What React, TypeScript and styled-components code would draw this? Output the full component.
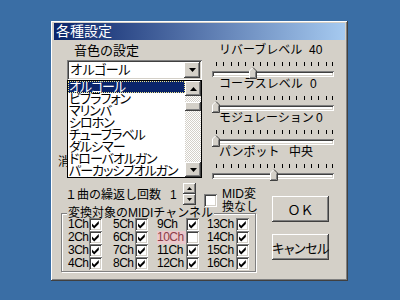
import React from 'react'
import styled, { createGlobalStyle } from 'styled-components'

const FONT = `"Liberation Sans", "Noto Sans CJK JP", sans-serif`

const GlobalStyle = createGlobalStyle`
  html, body {
    margin: 0;
    padding: 0;
  }
  body {
    width: 400px;
    height: 300px;
    overflow: hidden;
    background: #3a6ea5;
    font-family: ${FONT};
    color: #000;
  }
  svg {
    display: block;
  }
`

const raised = `
  box-shadow: inset -1px -1px #404040, inset 1px 1px #fff,
    inset -2px -2px #808080, inset 2px 2px #d4d0c8;
`
const sunken = `
  box-shadow: inset 1px 1px #808080, inset -1px -1px #fff,
    inset 2px 2px #404040, inset -2px -2px #d4d0c8;
`

const Desktop = styled.div`
  width: 400px;
  height: 300px;
  box-sizing: border-box;
  padding: 21px 0 0 51px;
  display: flex;
  align-items: flex-start;
`

const Dialog = styled.div`
  width: 297px;
  height: 260px;
  box-sizing: border-box;
  padding: 2px 3px 3px;
  background: #d4d0c8;
  display: flex;
  flex-direction: column;
  box-shadow: inset -1px -1px #404040, inset 1px 1px #fff,
    inset -2px -2px #808080, inset 2px 2px #d4d0c8;
`

const TitleBar = styled.div`
  height: 17px;
  line-height: 17px;
  padding-left: 2px;
  font-size: 14px;
  color: #fff;
  background: linear-gradient(to right, #0a246a, #a6caf0);
  white-space: nowrap;
`

const Body = styled.div`
  flex: 1;
  display: flex;
  flex-direction: column;
  padding: 4px 0 0 3px;
`

const TopSection = styled.div`
  display: flex;
  height: 136px;
`

const LeftCol = styled.div`
  width: 155px;
  display: flex;
  flex-direction: column;
`

const SectionLabel = styled.div`
  margin-left: 17px;
  height: 14px;
  line-height: 14px;
  font-size: 13px;
  margin-bottom: 2px;
`

const ComboWrap = styled.div`
  position: relative;
  margin-left: 10px;
  width: 135px;
`

const Combo = styled.div`
  height: 20px;
  box-sizing: border-box;
  background: #fff;
  ${sunken}
  display: flex;
  align-items: center;
  justify-content: space-between;
  padding: 0 2px 0 3px;
`

const ComboText = styled.span`
  font-size: 13px;
  line-height: 14px;
  letter-spacing: -1px;
`

const SmallButton = styled.div<{ $h?: number; $w?: number }>`
  width: ${(p) => p.$w ?? 16}px;
  height: ${(p) => p.$h ?? 16}px;
  box-sizing: border-box;
  background: #d4d0c8;
  ${raised}
  display: flex;
  align-items: center;
  justify-content: center;
`

const ListPopup = styled.div`
  position: absolute;
  top: 20px;
  left: 0;
  width: 135px;
  height: 98px;
  box-sizing: border-box;
  border: 1px solid #000;
  background: #fff;
  display: flex;
  z-index: 2;
`

const Items = styled.div`
  flex: 1;
  display: flex;
  flex-direction: column;
  overflow: hidden;
`

const Item = styled.div<{ $selected?: boolean }>`
  height: 12px;
  line-height: 12px;
  font-size: 13px;
  letter-spacing: -1px;
  padding-left: 1px;
  white-space: nowrap;
  overflow: hidden;
  font-feature-settings: 'palt';
  background: ${(p) => (p.$selected ? '#0a246a' : 'transparent')};
  color: ${(p) => (p.$selected ? '#fff' : '#000')};
  outline: ${(p) => (p.$selected ? '1px dotted #f0e68c' : 'none')};
  outline-offset: -1px;
`

const ScrollBar = styled.div`
  width: 16px;
  display: flex;
  flex-direction: column;
`

const ScrollTrack = styled.div`
  flex: 1;
  background: repeating-conic-gradient(#d4d0c8 0 25%, #fff 0 50%) 0 0 / 2px 2px;
  display: flex;
  flex-direction: column;
`

const ScrollThumb = styled.div`
  margin-top: 6px;
  height: 9px;
  background: #d4d0c8;
  ${raised}
`

const MuteLabel = styled.div`
  margin-top: 75px;
  margin-left: 1px;
  font-size: 12px;
  line-height: 14px;
  white-space: nowrap;
`

const RightCol = styled.div`
  width: 122px;
  display: flex;
  flex-direction: column;
`

const SliderBlock = styled.div`
  height: 34px;
  display: flex;
  flex-direction: column;
`

const SliderHead = styled.div`
  display: flex;
  height: 13px;
  line-height: 13px;
  font-size: 12px;
  padding-left: 7px;
  white-space: nowrap;
`

const SliderName = styled.span<{ $w: number }>`
  width: ${(p) => p.$w}px;
  flex-shrink: 0;
`

const TickRow = styled.div`
  position: relative;
  height: 4px;
  margin-top: 5px;
`

const Tick = styled.div`
  position: absolute;
  top: 0;
  width: 1px;
  height: 4px;
  background: #000;
`

const TrackArea = styled.div`
  position: relative;
  height: 11px;
  margin-top: 1px;
  padding-top: 4px;
  box-sizing: border-box;
`

const Track = styled.div`
  height: 6px;
  background: #fff;
  ${sunken}
`

const ThumbBox = styled.div`
  position: absolute;
  top: 0;
  width: 8px;
  height: 12px;
`

const BottomSection = styled.div`
  display: flex;
  flex: 1;
`

const BottomLeft = styled.div`
  width: 203px;
  display: flex;
  flex-direction: column;
`

const RepeatRow = styled.div`
  display: flex;
  align-items: flex-start;
  height: 27px;
`

const RepeatLabel = styled.div`
  margin: 8px 0 0 8px;
  width: 105px;
  font-size: 12px;
  line-height: 14px;
  white-space: nowrap;
`

const RepeatValue = styled.div`
  margin-top: 8px;
  width: 13px;
  font-size: 12px;
  line-height: 14px;
`

const Spin = styled.div`
  margin-top: 3px;
  width: 13px;
  display: flex;
  flex-direction: column;
`

const Check = styled.div<{ $mt?: number; $ml?: number }>`
  width: 13px;
  height: 13px;
  box-sizing: border-box;
  flex-shrink: 0;
  margin-top: ${(p) => p.$mt ?? 0}px;
  margin-left: ${(p) => p.$ml ?? 0}px;
  background: #fff;
  ${sunken}
  display: flex;
  align-items: center;
  justify-content: center;
  align-self: center;
`

const MidText = styled.div`
  margin: 8px 0 0 5px;
  font-size: 12px;
  line-height: 13px;
  white-space: nowrap;
`

const GroupBox = styled.fieldset`
  margin: 0 0 0 4px;
  padding: 0 0 1px 6px;
  width: 195px;
  min-width: 0;
  box-sizing: border-box;
  border: 1px solid #808080;
  box-shadow: inset 1px 1px #fff, 1px 1px #fff;
`

const Legend = styled.legend`
  font-size: 12px;
  line-height: 12px;
  padding: 0 1px;
  margin-left: -1px;
  background: #d4d0c8;
  white-space: nowrap;
`

const ChannelGrid = styled.div`
  display: grid;
  grid-template-columns: 21px 24px 22px 22px 29px 21px 29px 13px;
  grid-auto-rows: 13px;
  margin-top: -1px;
`

const ChLabel = styled.div<{ $mark?: boolean }>`
  font-size: 12px;
  line-height: 13px;
  letter-spacing: -0.5px;
  white-space: nowrap;
  background: ${(p) => (p.$mark ? '#ebc8cc' : 'transparent')};
  color: ${(p) => (p.$mark ? '#8c3c48' : '#000')};
`

const ButtonCol = styled.div`
  margin-left: 12px;
  padding-top: 16px;
  display: flex;
  flex-direction: column;
  gap: 12px;
`

const PushButton = styled.div`
  width: 57px;
  height: 26px;
  box-sizing: border-box;
  background: #d4d0c8;
  ${raised}
  display: flex;
  align-items: center;
  justify-content: center;
  font-size: 13px;
  white-space: nowrap;
`

const ButtonText = styled.span`
  font-feature-settings: 'palt';
  letter-spacing: -0.5px;
`

const Arrow = ({ down, size = 7 }: { down?: boolean; size?: number }) => {
  const h = Math.ceil(size / 2)
  return (
    <svg width={size} height={h} viewBox={`0 0 ${size} ${h}`}>
      <polygon
        points={down ? `0,0 ${size},0 ${size / 2},${h}` : `0,${h} ${size},${h} ${size / 2},0`}
        fill="#000"
      />
    </svg>
  )
}

const CheckMark = () => (
  <svg width="9" height="9" viewBox="0 0 9 9">
    <path d="M1 3.5 L3.2 5.7 L7.8 1.1 L7.8 3.9 L3.2 8.5 L1 6.3 Z" fill="#000" />
  </svg>
)

const SliderThumb = () => (
  <svg width="8" height="12" viewBox="0 0 8 12">
    <path d="M0.5 11.5 V4 L4 0.5 L7.5 4 V11.5 Z" fill="#d4d0c8" />
    <polyline points="0.5,11 0.5,4 4,0.5" fill="none" stroke="#fff" />
    <polyline points="4,0.5 7.5,4 7.5,11.5 0,11.5" fill="none" stroke="#404040" />
    <polyline points="6.5,4.5 6.5,10.5 1,10.5" fill="none" stroke="#808080" />
  </svg>
)

const MAX = 127
const SPAN = 116
const tickValues = [...Array.from({ length: 16 }, (_, i) => i * 8), 127]

type SliderProps = { name: string; value: string; pos: number; nameWidth: number }
const Slider = ({ name, value, pos, nameWidth }: SliderProps) => (
  <SliderBlock>
    <SliderHead>
      <SliderName $w={nameWidth}>{name}</SliderName>
      <span>{value}</span>
    </SliderHead>
    <TickRow>
      {tickValues.map((v) => (
        <Tick key={v} style={{ left: 4 + Math.round((v / MAX) * SPAN) }} />
      ))}
    </TickRow>
    <TrackArea>
      <Track />
      <ThumbBox style={{ left: Math.round((pos / MAX) * SPAN) }}>
        <SliderThumb />
      </ThumbBox>
    </TrackArea>
  </SliderBlock>
)

const voices = [
  'オルゴール',
  'ビブラフォン',
  'マリンバ',
  'シロホン',
  'チューブラベル',
  'ダルシマー',
  'ドローバオルガン',
  'パーカッシブオルガン',
]

const rows = [0, 1, 2, 3]

export default function App() {
  return (
    <>
      <GlobalStyle />
      <Desktop>
        <Dialog>
          <TitleBar>各種設定</TitleBar>
          <Body>
            <TopSection>
              <LeftCol>
                <SectionLabel>音色の設定</SectionLabel>
                <ComboWrap>
                  <Combo>
                    <ComboText>オルゴール</ComboText>
                    <SmallButton>
                      <Arrow down />
                    </SmallButton>
                  </Combo>
                  <ListPopup>
                    <Items>
                      {voices.map((v, i) => (
                        <Item key={v} $selected={i === 0}>
                          {v}
                        </Item>
                      ))}
                    </Items>
                    <ScrollBar>
                      <SmallButton $h={15}>
                        <Arrow />
                      </SmallButton>
                      <ScrollTrack>
                        <ScrollThumb />
                      </ScrollTrack>
                      <SmallButton $h={15}>
                        <Arrow down />
                      </SmallButton>
                    </ScrollBar>
                  </ListPopup>
                </ComboWrap>
                <MuteLabel>消音チャンネル</MuteLabel>
              </LeftCol>
              <RightCol>
                <Slider name="リバーブレベル" value="40" pos={40} nameWidth={90} />
                <Slider name="コーラスレベル" value="0" pos={0} nameWidth={91} />
                <Slider name="モジュレーション" value="0" pos={0} nameWidth={97} />
                <Slider name="パンポット" value="中央" pos={64} nameWidth={70} />
              </RightCol>
            </TopSection>
            <BottomSection>
              <BottomLeft>
                <RepeatRow>
                  <RepeatLabel>１曲の繰返し回数</RepeatLabel>
                  <RepeatValue>1</RepeatValue>
                  <Spin>
                    <SmallButton $w={13} $h={11}>
                      <Arrow size={5} />
                    </SmallButton>
                    <SmallButton $w={13} $h={11}>
                      <Arrow size={5} down />
                    </SmallButton>
                  </Spin>
                  <Check $mt={13} $ml={8} />
                  <MidText>
                    MID変
                    <br />
                    換なし
                  </MidText>
                </RepeatRow>
                <GroupBox>
                  <Legend>変換対象のMIDIチャンネル</Legend>
                  <ChannelGrid>
                    {rows.map((r) =>
                      [1, 5, 9, 13].map((base) => {
                        const ch = base + r
                        return (
                          <React.Fragment key={ch}>
                            <ChLabel $mark={ch === 10}>{ch}Ch</ChLabel>
                            <Check>{ch !== 10 && <CheckMark />}</Check>
                          </React.Fragment>
                        )
                      }),
                    )}
                  </ChannelGrid>
                </GroupBox>
              </BottomLeft>
              <ButtonCol>
                <PushButton>ＯＫ</PushButton>
                <PushButton>
                  <ButtonText>キャンセル</ButtonText>
                </PushButton>
              </ButtonCol>
            </BottomSection>
          </Body>
        </Dialog>
      </Desktop>
    </>
  )
}
